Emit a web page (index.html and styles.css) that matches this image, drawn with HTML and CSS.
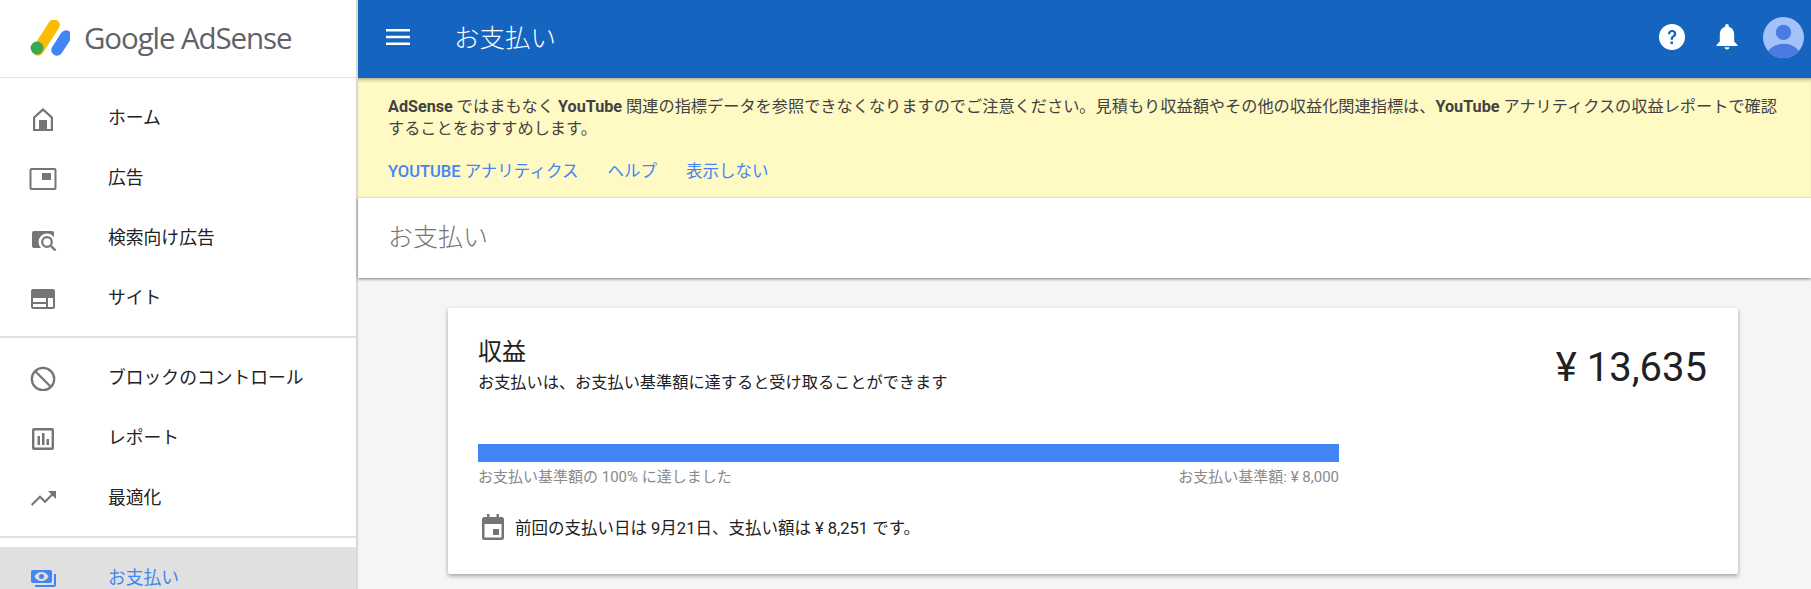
FILE: index.html
```html
<!DOCTYPE html>
<html lang="ja">
<head>
    <meta charset="UTF-8">
    <title>お支払い</title>
    <link rel="stylesheet" href="styles.css">
</head>
<body>
<aside class="sidebar">
    <div class="brand">
        <svg class="brand-mark" viewBox="0 0 40 36" width="40" height="36">
            <path d="M24 5 L8 30" stroke="#fbbc04" stroke-width="11.5" stroke-linecap="round"/>
            <path d="M36 16 L27 30" stroke="#4285f4" stroke-width="11.5" stroke-linecap="round"/>
            <circle cx="7" cy="28" r="6.4" fill="#34a853"/>
        </svg>
        <span class="brand-name">Google AdSense</span>
    </div>
    <nav class="nav">
        <div class="nav-group">
            <a class="nav-item">
                <svg class="nav-icon" viewBox="0 0 28 28"><path fill-rule="evenodd" d="M14 5 24 14V28H4V14zM14 8 6.200 15V26H21.800V15z"/><path d="M10 17h8v9h-8z"/></svg>
                <span>ホーム</span>
            </a>
            <a class="nav-item">
                <svg class="nav-icon" viewBox="0 0 28 28"><path fill-rule="evenodd" d="M2.500 5h23a2 2 0 0 1 2 2v18a2 2 0 0 1-2 2h-23a2 2 0 0 1-2-2V7a2 2 0 0 1 2-2zM2.500 7v18h23V7z"/><path d="M13 10h9v7h-9z"/></svg>
                <span>広告</span>
            </a>
            <a class="nav-item">
                <svg class="nav-icon" viewBox="0 0 28 28">
                    <rect x="3" y="8" width="22" height="17" rx="2"/>
                    <circle cx="18" cy="19" r="8.500" fill="#fff"/>
                    <path d="M22 23l4.500 4.500" stroke="#757575" stroke-width="2.400"/>
                    <circle cx="18" cy="19" r="4.800" fill="#fff" stroke="#757575" stroke-width="2.200"/>
                </svg>
                <span>検索向け広告</span>
            </a>
            <a class="nav-item">
                <svg class="nav-icon" viewBox="0 0 28 28"><path fill-rule="evenodd" d="M4 6h20a2 2 0 0 1 2 2v16a2 2 0 0 1-2 2H4a2 2 0 0 1-2-2V8a2 2 0 0 1 2-2zM4 15v4h13v-4zM4 21v3h13v-3zM19 15v9h5v-9z"/></svg>
                <span>サイト</span>
            </a>
        </div>
        <div class="nav-group">
            <a class="nav-item">
                <svg class="nav-icon" viewBox="0 0 28 28"><circle cx="14" cy="16" r="11.200" fill="none" stroke="#757575" stroke-width="2.300"/><path d="M6 8l16 16" stroke="#757575" stroke-width="2.300"/></svg>
                <span>ブロックのコントロール</span>
            </a>
            <a class="nav-item">
                <svg class="nav-icon" viewBox="0 0 28 28"><path fill-rule="evenodd" d="M5 5h18a2 2 0 0 1 2 2v18a2 2 0 0 1-2 2H5a2 2 0 0 1-2-2V7a2 2 0 0 1 2-2zM5.400 7.400v17.200h17.200V7.400z"/><path d="M8.500 13H11v9H8.500zM13 10h2.500v12H13zM17.500 16H20v6h-2.500z"/></svg>
                <span>レポート</span>
            </a>
            <a class="nav-item">
                <svg class="nav-icon" viewBox="0 0 28 28"><path d="M2.700 22l8.300-8.300 5 5 8-8" fill="none" stroke="#757575" stroke-width="2.100"/><path d="M19 8h8v8z"/></svg>
                <span>最適化</span>
            </a>
        </div>
        <div class="nav-group">
            <a class="nav-item active">
                <svg class="nav-icon" viewBox="0 0 28 28"><path fill-rule="evenodd" d="M4 7h17a2 2 0 0 1 2 2v9a2 2 0 0 1-2 2H4a2 2 0 0 1-2-2V9a2 2 0 0 1 2-2zM12.500 9c-3 0-6 2-7 4.500 1 2.500 4 4.500 7 4.500s6-2 7-4.500c-1-2.500-4-4.500-7-4.500zM12.500 11a2.500 2.500 0 1 1 0 5 2.500 2.500 0 0 1 0-5z"/><path d="M25 11h2v11a2 2 0 0 1-2 2H6v-2h19z"/></svg>
                <span>お支払い</span>
            </a>
        </div>
    </nav>
</aside>

<div class="main">
    <header class="topbar">
        <svg class="menu-icon" viewBox="0 0 24 24" width="24" height="24"><path d="M0 4h24v2.600H0zm0 6.700h24v2.600H0zm0 6.700h24V20H0z"/></svg>
        <div class="topbar-title">お支払い</div>
        <div class="topbar-actions">
            <svg class="action-icon help" viewBox="0 0 26 26" width="26" height="26"><circle cx="13" cy="13" r="13"/><path class="question" d="M8.800 10.200C8.900 7.700 10.700 6 13.200 6c2.400 0 4.100 1.500 4.100 3.700 0 1.600-.8 2.500-2 3.400-1 .8-1.300 1.200-1.300 2.600h-2.400c0-2 .5-2.900 1.800-3.900 1-.8 1.500-1.300 1.500-2.100 0-1-.7-1.700-1.800-1.700-1.100 0-1.900.8-2 2.200zM11.500 17.500H14V20h-2.500z"/></svg>
            <svg class="action-icon bell" viewBox="0 0 22 26" width="22" height="26"><path d="M11 0c1 0 1.800.8 1.800 1.800v1C16.600 3.800 18.200 7 18.200 11v6.500L21.500 21v1H.5v-1l3.300-3.500V11c0-4 1.600-7.200 5.400-8.200v-1C9.200.8 10 0 11 0zM8.600 23.300h4.800C13.300 24.800 12.300 25.500 11 25.500s-2.300-.7-2.400-2.200z"/></svg>
            <svg class="avatar" viewBox="0 0 40 40" width="41" height="41">
                <defs><clipPath id="avatar-clip"><circle cx="20" cy="20" r="20"/></clipPath></defs>
                <circle cx="20" cy="20" r="20" fill="#a3c2fa"/>
                <g clip-path="url(#avatar-clip)" fill="#4a7be0">
                    <circle cx="20" cy="15" r="7.500"/>
                    <ellipse cx="20" cy="40" rx="17" ry="14"/>
                </g>
            </svg>
        </div>
    </header>

    <section class="notice">
        <p class="notice-line"><b>AdSense</b> ではまもなく <b>YouTube</b> 関連の指標データを参照できなくなりますのでご注意ください。見積もり収益額やその他の収益化関連指標は、<b>YouTube</b> アナリティクスの収益レポートで確認</p>
        <p class="notice-line">することをおすすめします。</p>
        <div class="notice-links">
            <a><b>YOUTUBE</b> アナリティクス</a>
            <a>ヘルプ</a>
            <a>表示しない</a>
        </div>
    </section>

    <div class="page-title">お支払い</div>

    <div class="content">
        <section class="card">
            <div class="card-head">
                <div>
                    <h2 class="card-title">収益</h2>
                    <p class="card-sub">お支払いは、お支払い基準額に達すると受け取ることができます</p>
                </div>
                <div class="amount">¥ 13,635</div>
            </div>
            <div class="progress">
                <div class="progress-bar"><div class="progress-fill" style="width: 100%"></div></div>
                <div class="progress-labels">
                    <span>お支払い基準額の 100% に達しました</span>
                    <span>お支払い基準額: ¥ 8,000</span>
                </div>
            </div>
            <div class="last-payment">
                <svg class="calendar" viewBox="0 0 22 26" width="22" height="26"><path d="M5 0h2.500v3h7V0H17v3h2.500A2.500 2.500 0 0 1 22 5.500v18a2.500 2.500 0 0 1-2.500 2.500h-17A2.500 2.500 0 0 1 0 23.500v-18A2.500 2.500 0 0 1 2.500 3H5zM2.500 10v13.500h17V10zM11 15h6v6h-6z"/></svg>
                <span>前回の支払い日は 9月21日、支払い額は ¥ 8,251 です。</span>
            </div>
        </section>
    </div>
</div>
</body>
</html>
```

FILE: styles.css
```css
* {
    margin: 0;
    padding: 0;
    box-sizing: border-box;
}

body {
    font-family: Roboto, "Noto Sans CJK JP", sans-serif;
    height: 100vh;
    display: flex;
    overflow: hidden;
    background: #f5f5f5;
    color: #212121;
}

/* sidebar */
.sidebar {
    width: 358px;
    flex-shrink: 0;
    background: #fff;
    border-right: 2px solid #d8d8d8;
}

.brand {
    height: 78px;
    display: flex;
    align-items: center;
    padding: 0 0 2px 30px;
    border-bottom: 1px solid #e0e0e0;
}

.brand-mark {
    width: 40px;
    height: 36px;
    margin-right: 14px;
}

.brand-name {
    font-family: "Open Sans", sans-serif;
    font-size: 29.500px;
    font-weight: 500;
    letter-spacing: -1.100px;
    color: #5f6368;
}

.nav-group {
    padding: 9px 0;
    border-bottom: 2px solid #e0e0e0;
}

.nav-group:last-child {
    border-bottom: 0;
}

.nav-item {
    height: 60px;
    display: flex;
    align-items: center;
    padding-left: 29px;
    font-size: 17.800px;
}

.nav-item span {
    margin-top: -2px;
}

.nav-icon {
    width: 28px;
    height: 28px;
    margin-right: 51px;
    fill: #757575;
}

.nav-item.active {
    background: #e0e0e0;
    color: #4285f4;
}

.nav-item.active .nav-icon {
    fill: #4285f4;
}

/* main column */
.main {
    flex: 1;
    min-width: 0;
}

.topbar {
    height: 78px;
    display: flex;
    align-items: center;
    background: #1565c0;
    color: #fff;
    padding: 0 7px 4px 28px;
}

.menu-icon {
    fill: #fff;
    margin-right: 44px;
}

.topbar-title {
    font-size: 25.500px;
    font-weight: 300;
    margin-bottom: 3px;
}

.topbar-actions {
    margin-left: auto;
    display: flex;
    align-items: center;
}

.action-icon {
    fill: #fff;
}

.help {
    margin-right: 31px;
}

.bell {
    margin-right: 25px;
}

.question {
    fill: #1565c0;
}

.notice {
    height: 120px;
    background: #fff9c4;
    padding: 18px 30px 0;
    color: #424242;
    box-shadow: inset 0 4px 4px -3px rgba(0, 0, 0, 0.4);
}

.notice-line {
    font-size: 16.200px;
    line-height: 22px;
}

.notice-links {
    display: flex;
    gap: 29px;
    margin-top: 18px;
    font-size: 16.500px;
    color: #4285f4;
}

.notice-links b {
    font-weight: 500;
}

.page-title {
    height: 80px;
    line-height: 80px;
    padding-left: 30px;
    background: #fff;
    font-size: 25px;
    font-weight: 300;
    color: #757575;
    box-shadow: 0 1px 3px rgba(0, 0, 0, 0.5);
}

.content {
    padding: 30px 73px 0 90px;
}

.card {
    height: 266px;
    background: #fff;
    border-radius: 2px;
    box-shadow: 0 2px 4px rgba(0, 0, 0, 0.35);
    padding: 27px 31px 0 30px;
}

.card-head {
    display: flex;
    justify-content: space-between;
    align-items: flex-start;
}

.card-title {
    font-size: 24px;
    font-weight: 400;
    line-height: 34px;
}

.card-sub {
    font-size: 16.200px;
    line-height: 24px;
    margin-top: 2px;
}

.amount {
    font-size: 40px;
    font-weight: 400;
    line-height: 60px;
    margin-top: 3px;
}

.progress {
    width: 861px;
    margin-top: 46px;
}

.progress-bar {
    height: 18px;
    background: #e0e0e0;
}

.progress-fill {
    height: 100%;
    background: #4285f4;
}

.progress-labels {
    display: flex;
    justify-content: space-between;
    margin-top: 3px;
    font-size: 15px;
    color: #8a8a8a;
}

.last-payment {
    display: flex;
    align-items: center;
    margin-top: 28px;
    padding-left: 4px;
    font-size: 16.500px;
}

.calendar {
    fill: #757575;
    margin-right: 11px;
}
```
